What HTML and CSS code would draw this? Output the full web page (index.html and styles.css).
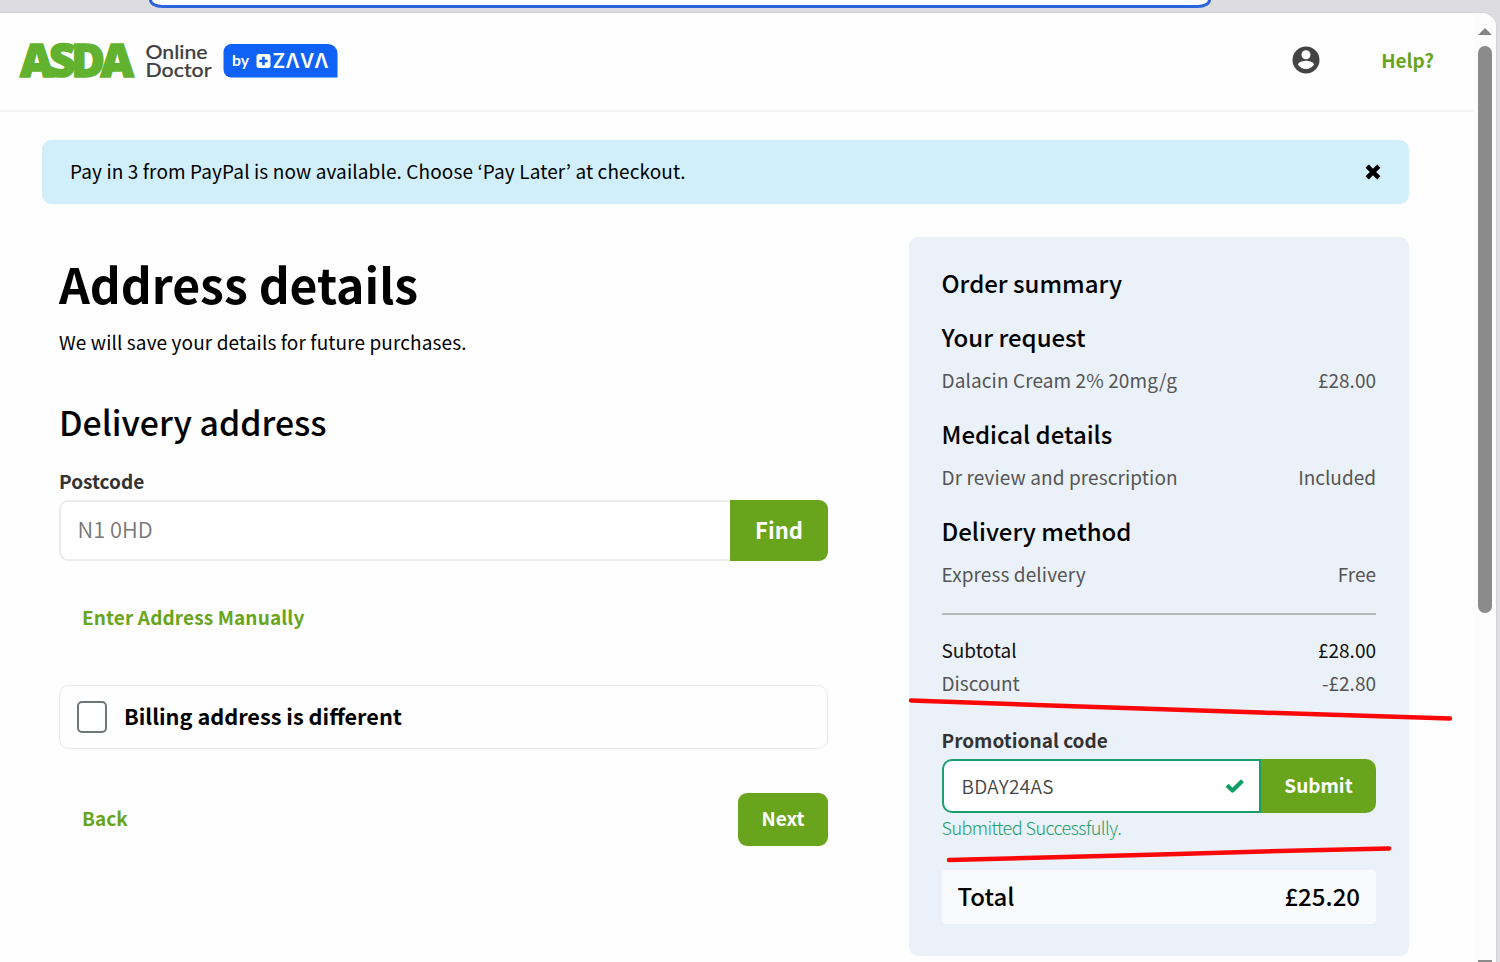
FILE: index.html
```html
<!DOCTYPE html>
<html lang="en">
<head>
<meta charset="utf-8">
<title>Address details</title>
<link rel="stylesheet" href="styles.css">
</head>
<body>
<div class="browser">
  <div class="address-bar"></div>
  <div class="window">
    <div class="page">
      <header class="header">
        <div class="brand">
          <svg class="logo" width="330" height="46" viewBox="0 0 330 46" role="img">
            <text class="logo-asda" x="2" y="40" textLength="114" lengthAdjust="spacing">ASDA</text>
            <text class="logo-sub" x="127.500" y="22" textLength="62" lengthAdjust="spacingAndGlyphs">Online</text>
            <text class="logo-sub" x="127.500" y="40" textLength="66" lengthAdjust="spacingAndGlyphs">Doctor</text>
            <path fill="#0f62f5" d="M213.500 7H310a9.500 9.500 0 0 1 9.500 9.500V40.500H213.500a8 8 0 0 1-8-8V15a8 8 0 0 1 8-8z"/>
            <text class="logo-by" x="214" y="29" textLength="17" lengthAdjust="spacingAndGlyphs">by</text>
            <rect x="238.500" y="17" width="14" height="14" rx="2.500" fill="#fff"/>
            <path stroke="#0f62f5" stroke-width="2.600" d="M245.500 19.800v8.400M241.300 24h8.400"/>
            <text class="logo-zava" x="254.500" y="31" textLength="56" lengthAdjust="spacing">ZΛVΛ</text>
          </svg>
        </div>
        <nav class="nav">
          <svg class="avatar" width="28" height="28" viewBox="0 0 28 28">
            <circle cx="14" cy="14" r="13.500" fill="#444"/>
            <circle cx="14" cy="8.700" r="4.500" fill="#fff"/>
            <path fill="#fff" d="M5.800 18.300C7.500 15.700 11 14.800 14 14.800s6.500.9 8.200 3.500C20.500 21.300 17.500 23 14 23s-6.500-1.700-8.200-4.700z"/>
          </svg>
          <a class="help">Help?</a>
        </nav>
      </header>
      <div class="banner">
        <span class="banner-text">Pay in 3 from PayPal is now available. Choose ‘Pay Later’ at checkout.</span>
        <svg class="close" width="16" height="16" viewBox="0 0 16 16"><path stroke="#000" stroke-width="4.600" d="M2.200 2.200 13.800 13.800M13.800 2.200 2.200 13.800"/></svg>
      </div>
      <main class="columns">
        <section class="form">
          <h1 class="title">Address details</h1>
          <p class="lead">We will save your details for future purchases.</p>
          <h2 class="subtitle">Delivery address</h2>
          <label class="label postcode-label">Postcode</label>
          <div class="group postcode">
            <div class="field"><span>N1 0HD</span></div>
            <div class="btn find">Find</div>
          </div>
          <a class="link manual">Enter Address Manually</a>
          <div class="billing"><i class="checkbox"></i><span>Billing address is different</span></div>
          <div class="actions">
            <a class="link back">Back</a>
            <div class="btn next">Next</div>
          </div>
        </section>
        <aside class="summary">
          <h3 class="heading">Order summary</h3>
          <h3 class="heading first">Your request</h3>
          <div class="row"><span class="item">Dalacin Cream 2% 20mg/g</span><span>£28.00</span></div>
          <h3 class="heading next-heading">Medical details</h3>
          <div class="row"><span class="item">Dr review and prescription</span><span>Included</span></div>
          <h3 class="heading next-heading">Delivery method</h3>
          <div class="row"><span class="item">Express delivery</span><span>Free</span></div>
          <div class="rule"></div>
          <div class="sum dark"><span>Subtotal</span><span>£28.00</span></div>
          <div class="sum"><span>Discount</span><span>-£2.80</span></div>
          <label class="label promo-label">Promotional code</label>
          <div class="group promo">
            <div class="field code"><span>BDAY24AS</span>
              <svg width="20" height="16" viewBox="0 0 20 16"><path fill="none" stroke="#0e9f67" stroke-width="4.200" stroke-linejoin="round" d="M2 7.300 7.500 12.500 17.500 2.700"/></svg>
            </div>
            <div class="btn submit">Submit</div>
          </div>
          <p class="success">Submitted Successfully.</p>
          <div class="total"><span>Total</span><span>£25.20</span></div>
        </aside>
      </main>
    </div>
    <div class="scrollbar">
      <i class="arrow-up"></i>
      <i class="thumb"></i>
      <i class="scroll-end"></i>
    </div>
  </div>
  <svg class="marks" width="1500" height="962" viewBox="0 0 1500 962">
    <path d="M911 700.500 1050 705.500 1260 712.500 1450 718.500M949 860 1160 854.500 1300 850.500 1389 848.500"/>
  </svg>
</div>
</body>
</html>
```
FILE: styles.css
```css
* { box-sizing: border-box; }
body { margin: 0; font-family: "Noto Sans CJK KR", "Noto Sans", sans-serif; color: #000; }
h1, h2, h3, p { margin: 0; }
.browser { position: relative; width: 1500px; height: 962px; overflow: hidden; background: #dcdce1; display: flex; flex-direction: column; }
.address-bar { flex: none; width: 1062px; height: 8px; margin: 0 0 4px 149px; border: solid #2b63dc; border-width: 0 3px 3px; border-radius: 0 0 20px 20px / 0 0 12px 12px; background: #fff; }
.window { flex: 1; width: 1497px; display: flex; background: #fefefe; border-top: 1px solid #d0d0d5; border-right: 1px solid #d2d2d8; border-top-right-radius: 15px; overflow: hidden; }
.page { width: 1473px; display: flex; flex-direction: column; }
.header { height: 99px; padding: 0 39px 3px 18px; display: flex; align-items: center; justify-content: space-between; border-bottom: 2px solid #f3f3f3; }
.logo { display: block; overflow: visible; }
.logo-asda { font: 800 46px "Open Sans", sans-serif; fill: #62b22f; stroke: #62b22f; stroke-width: 1.600; }
.logo-sub { font: 500 20px Lato, sans-serif; fill: #3f4042; stroke: #3f4042; stroke-width: .2; }
.logo-by { font: 700 16px Lato, sans-serif; fill: #fff; }
.logo-zava { font: 600 19.500px Inter, sans-serif; fill: #fff; }
.nav { display: flex; align-items: center; gap: 61px; }
.avatar { display: block; }
.help { font-weight: 700; font-size: 19px; line-height: 28px; padding-bottom: 1px; color: #68a51c; }
.banner { width: 1367px; height: 64px; margin: 28px 0 0 42px; padding: 0 28px 0 28px; border-radius: 9px; background: #d1effa; display: flex; align-items: center; justify-content: space-between; font-size: 19px; line-height: 30px; }
.banner-text { padding-bottom: 2px; letter-spacing: .110px; }
.columns { display: flex; margin: 33px 0 0 59px; }
.form { width: 769px; margin-right: 81px; }
.title { margin-top: 16px; font-size: 48.100px; line-height: 60px; font-weight: 700; }
.lead { margin-top: 14px; font-size: 19px; line-height: 30px; letter-spacing: .11px; }
.subtitle { margin-top: 43px; font-size: 33.800px; line-height: 44px; font-weight: 500; }
.label { display: block; font-size: 19px; font-weight: 700; color: #333; }
.postcode-label { margin-top: 24px; line-height: 26px; }
.group { display: flex; }
.postcode { height: 61px; margin-top: 6px; }
.field { flex: 1; display: flex; align-items: center; justify-content: space-between; padding: 0 16.500px 3px; border: 2px solid #ececec; border-right: 0; border-radius: 9px 0 0 9px; background: #fff; font-size: 21.800px; line-height: 30px; color: #777; font-weight: 350; }
.btn { display: flex; align-items: center; justify-content: center; padding-bottom: 3px; background: #68a51c; color: #fff; font-weight: 700; font-size: 19px; line-height: 28px; }
.find { width: 98px; border-radius: 0 9px 9px 0; font-size: 22px; }
.link { display: block; color: #68a51c; font-weight: 700; font-size: 19px; line-height: 28px; padding-left: 23px; }
.manual { margin-top: 42px; letter-spacing: .12px; }
.billing { margin-top: 54px; height: 64px; border: 1.500px solid #e8e8e8; border-radius: 10px; display: flex; align-items: center; padding-left: 17px; gap: 17px; font-size: 21.700px; line-height: 30px; font-weight: 700; }
.billing span { padding-bottom: 2px; }
.checkbox { width: 30px; height: 32px; border: 2px solid #6f7678; border-radius: 5px; background: #fff; }
.actions { margin-top: 44px; display: flex; justify-content: space-between; align-items: center; }
.back { padding-bottom: 4px; }
.next { width: 90px; height: 53px; border-radius: 9px; }
.summary { width: 500px; height: 719px; padding: 28px 33px 0 32.500px; border-radius: 9px; background: #ebf1f8; }
.heading { font-size: 24px; line-height: 36px; font-weight: 500; }
.first { margin-top: 18px; }
.next-heading { margin-top: 20px; }
.row { margin-top: 9px; display: flex; justify-content: space-between; font-size: 19px; line-height: 32px; color: #555; }
.item { letter-spacing: .1px; }
.rule { height: 2px; margin: 23px 0 18px; background: #b5babd; }
.sum { display: flex; justify-content: space-between; font-size: 19px; line-height: 33px; color: #555; }
.dark { color: #111; }
.promo-label { margin-top: 27px; line-height: 28px; }
.promo { height: 54px; margin-top: 5px; }
.code { border: 2px solid #1b9e6c; border-radius: 10px 0 0 10px; font-size: 19px; color: #444; padding: 0 14px 0 18px; }
.code span { padding-bottom: 1px; letter-spacing: .3px; }
.submit { width: 115px; border-radius: 0 10px 10px 0; }
.success { margin-top: 2px; font-size: 18px; line-height: 24px; font-weight: 300; letter-spacing: -.540px; color: #1b9e6c; }
.total { height: 54px; margin-top: 31px; padding: 0 16px 2px; display: flex; align-items: center; justify-content: space-between; border-radius: 4px; background: #f9fafc; font-size: 24px; line-height: 36px; font-weight: 500; }
.scrollbar { width: 23px; padding-left: 1px; display: flex; flex-direction: column; align-items: center; background: #fcfcfc; }
.arrow-up { width: 0; margin-top: 15px; border: solid transparent; border-width: 0 7px 7px; border-bottom-color: #858585; }
.thumb { width: 14px; height: 567px; margin-top: 11px; border-radius: 7px; background: #8b8b8b; }
.scroll-end { width: 14px; height: 2px; margin-top: 347px; background: #8b8b8b; }
.marks { position: absolute; left: 0; top: 0; }
.marks path { fill: none; stroke: #fb0707; stroke-width: 4.500; stroke-linecap: round; stroke-linejoin: round; }
```
